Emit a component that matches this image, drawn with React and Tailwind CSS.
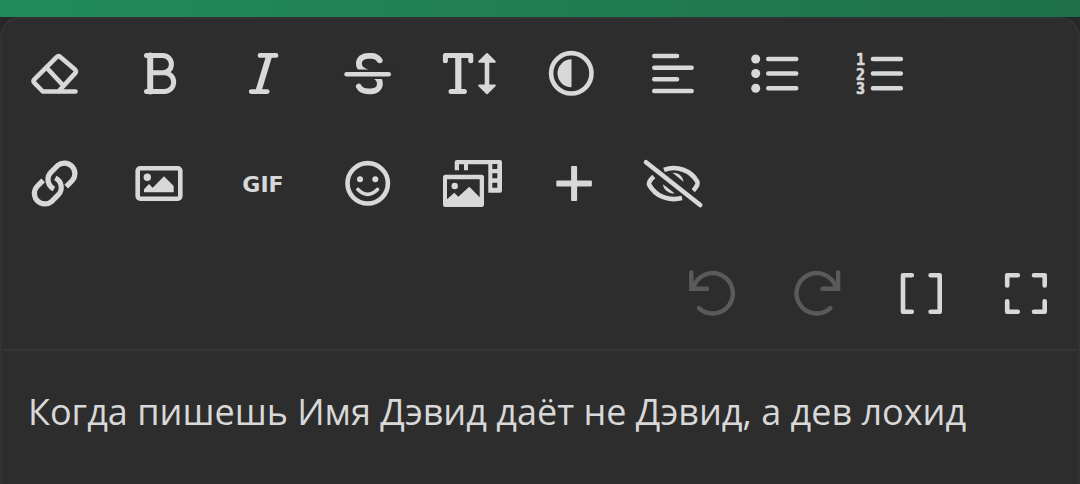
import { useState } from 'react';

function Icon({ children }) {
  return (
    <svg
      viewBox="-4 0 72 64"
      className="h-16 w-[72px]"
      fill="none"
      stroke="currentColor"
      strokeWidth="4.6"
      strokeLinecap="round"
      strokeLinejoin="round"
      aria-hidden="true"
    >
      {children}
    </svg>
  );
}

const eraser = (
  <Icon>
    <path d="M53.5 49.5H20.8L12.6 41.2q-2-2 0-4L34.6 15.2q2-2 4 0L53 27.6q1.8 1.8 0 3.8L36.5 49.5M24.7 25.7l15.8 17" />
  </Icon>
);

const bold = (
  <Icon>
    <g strokeWidth="5">
      <path d="M20.5 13.6H36.8a8.6 8.6 0 0 1 0 17.2H25M36.8 30.8h1.6a9.3 9.3 0 0 1 0 18.6H20.5" />
      <path d="M24.2 13.6v35.8" strokeWidth="6" />
    </g>
  </Icon>
);

const italic = (
  <Icon>
    <path d="M30 13.4H46M21.2 49.6H37.2" strokeWidth="4.8" />
    <path d="M39 14.3L28.5 48.8" strokeWidth="6" />
  </Icon>
);

const strike = (
  <Icon>
    <path
      d="M45.7 18.3C43.5 15 40.5 13.8 37.5 13.8H34C28.5 13.8 24.9 17.2 24.9 21.6C24.9 27.5 30 29 35.5 31.5C41 34 45.9 36 45.9 41.5C45.9 46 42.5 49.3 37 49.3H34.5C30 49.3 26.5 47.8 24.8 44.5"
      strokeWidth="5.8"
    />
    <path d="M12.6 32.3H54.7" stroke="#2d2d2d" strokeWidth="9.6" />
    <path d="M12.6 32.3H54.7" />
  </Icon>
);

const textSize = (
  <Icon>
    <path d="M8.4 18.8V13.6H33.8V18.8M14 49.6H27.4" strokeWidth="5" />
    <path d="M21.3 14v35" strokeWidth="6.2" />
    <path d="M50 18v27" />
    <path
      d="M50 12l7.8 7.8H42.2zM50 51.3l7.8-7.8H42.2z"
      fill="currentColor"
      strokeWidth="2"
    />
  </Icon>
);

const contrast = (
  <Icon>
    <circle cx="32.3" cy="31.3" r="20.2" />
    <path d="M32.5 17.3A14 14 0 0 0 32.5 45.3Z" fill="currentColor" stroke="none" />
  </Icon>
);

const align = (
  <Icon>
    <path d="M13.3 14H36M13.3 25.7H50.6M13.3 37.3H36M13.3 49H50.6" />
  </Icon>
);

const bulletList = (
  <Icon>
    <path d="M24.3 17H52.2M24.3 31.5H52.2M24.3 46.3H52.2" />
    <g fill="currentColor" stroke="none">
      <circle cx="11.7" cy="17" r="4.5" />
      <circle cx="11.7" cy="31.5" r="4.5" />
      <circle cx="11.7" cy="46.3" r="4.5" />
    </g>
  </Icon>
);

const numberList = (
  <Icon>
    <path d="M25 17H52.8M25 31.5H52.8M25 46.3H52.8" />
    <text
      fill="currentColor"
      strokeWidth="0.6"
      className="font-['DejaVu_Sans_Mono',monospace] text-[15px] font-bold"
    >
      <tspan x="8" y="23">1</tspan>
      <tspan x="8" y="38">2</tspan>
      <tspan x="8" y="52">3</tspan>
    </text>
  </Icon>
);

const link = (
  <Icon>
    <g strokeWidth="5.2" strokeLinecap="butt">
      <path d="M44.2 34.6L50.4 28.4A10.5 10.5 0 0 0 35.6 13.6L29.1 20.1A10.5 10.5 0 0 0 32 37" />
      <path d="M21.1 28.4L14.9 34.6A10.5 10.5 0 0 0 29.7 49.4L36.2 42.9A10.5 10.5 0 0 0 33.3 26" />
    </g>
  </Icon>
);

const image = (
  <Icon>
    <rect x="11.7" y="16.3" width="42.6" height="30.4" rx="2.5" />
    <g fill="currentColor" stroke="none">
      <circle cx="21.3" cy="25.3" r="3.7" />
      <path d="M18 40.3V37.3L23 32L26.7 35.7L38 24.3L47.7 34V40.3Z" />
    </g>
  </Icon>
);

const gif = (
  <span className="pt-0.5 pl-0.5 font-['DejaVu_Sans',sans-serif] text-[22px] leading-6 font-bold">
    GIF
  </span>
);

const smiley = (
  <Icon>
    <circle cx="33.7" cy="31.3" r="20.2" />
    <path d="M24 37.5Q33.7 47.3 43.4 37.5" strokeWidth="3.8" />
    <g fill="currentColor" stroke="none">
      <circle cx="26" cy="27.3" r="3" />
      <circle cx="41.3" cy="27.3" r="3" />
    </g>
  </Icon>
);

const gallery = (
  <Icon>
    <g fill="currentColor" stroke="none" fillRule="evenodd">
      <path d="M20 8H63Q65 8 65 10V38.7Q65 40.7 63 40.7H51.3V12.3H31V18.3H27V12.3H22V18.3H17.7V10.3Q17.7 8 20 8ZM55.3 12V17H60.3V12ZM55.3 21.3V26.3H60.3V21.3ZM55.3 30.7V35.7H60.3V30.7Z" />
      <path d="M8.5 22.7H44.5Q47 22.7 47 25.2V52.5Q47 55 44.5 55H8.5Q6 55 6 52.5V25.2Q6 22.7 8.5 22.7ZM10 27.3V47.3L17.3 40.7L21.3 44.7L32.3 34.7L42.7 45.3V27.3Z" />
      <circle cx="17.7" cy="34" r="3.2" />
    </g>
  </Icon>
);

const plus = (
  <Icon>
    <g fill="currentColor" stroke="none">
      <rect x="16.3" y="28.5" width="35.6" height="6" rx="1" />
      <rect x="31.1" y="14" width="6" height="35" rx="1" />
    </g>
  </Icon>
);

const hidden = (
  <Icon>
    <path d="M3 10.2L57.2 53" />
    <g strokeLinecap="butt">
      <path d="M21 17.8C34 13 48 18.5 54.3 29.6Q55 31.3 54.2 33Q52.8 36 50.2 38.6" />
      <path d="M10.8 24.6Q8 27 6.3 30.2Q5.6 31.6 6.3 33C12.5 44 25 49.5 39 46" />
    </g>
    <g fill="currentColor" stroke="none">
      <path d="M29.5 20.8C35.5 20.3 40 24.5 40.5 29.7Z" />
      <path d="M20 32.3C20.5 38 26 42 31.5 41.3Z" />
    </g>
  </Icon>
);

const undo = (
  <Icon>
    <g strokeWidth="4.4">
      <path d="M17 46.2A20.2 20.2 0 1 0 11.5 25" />
      <path d="M9.3 10.5V26.7H25" strokeLinejoin="miter" />
    </g>
  </Icon>
);

const redo = (
  <Icon>
    <g strokeWidth="4.4">
      <path d="M44.4 46.2A20.2 20.2 0 1 1 49.9 25" />
      <path d="M52.1 10.5V26.7H36.4" strokeLinejoin="miter" />
    </g>
  </Icon>
);

const brackets = (
  <Icon>
    <path d="M21.8 13.3H13V49.7H21.8M40.6 13.3H49.7V49.7H40.6" />
  </Icon>
);

const fullscreen = (
  <Icon>
    <path d="M23.8 13.3H13.2V23.5M40 13.3H50.7V23.5M13.2 39.3V49.7H23.8M40 49.7H50.7V39.3" />
  </Icon>
);

const formatTools = [
  { label: 'Очистить форматирование', icon: eraser },
  { label: 'Жирный', icon: bold },
  { label: 'Курсив', icon: italic },
  { label: 'Зачёркнутый', icon: strike },
  { label: 'Размер шрифта', icon: textSize, narrow: true },
  { label: 'Цвет текста', icon: contrast, narrow: true },
  { label: 'Выравнивание', icon: align, narrow: true },
  { label: 'Маркированный список', icon: bulletList },
  { label: 'Нумерованный список', icon: numberList },
];

const insertTools = [
  { label: 'Ссылка', icon: link },
  { label: 'Изображение', icon: image },
  { label: 'Вставить GIF', icon: gif },
  { label: 'Смайлы', icon: smiley },
  { label: 'Медиа', icon: gallery, narrow: true },
  { label: 'Вставить', icon: plus },
  { label: 'Скрытый текст', icon: hidden, narrow: true },
];

const viewTools = [
  { label: 'Отменить', icon: undo, disabled: true },
  { label: 'Повторить', icon: redo, disabled: true },
  { label: 'BB-коды', icon: brackets },
  { label: 'На весь экран', icon: fullscreen },
];

function ToolbarRow({ tools, className = '' }) {
  return (
    <div className={`flex flex-wrap ${className}`}>
      {tools.map((tool) => (
        <button
          key={tool.label}
          type="button"
          aria-label={tool.label}
          disabled={tool.disabled}
          className={`flex h-[110px] items-center justify-center text-[#d8d8d8] disabled:text-[#5a5a5a] ${
            tool.narrow ? 'w-[102px]' : 'w-[104px]'
          }`}
        >
          {tool.icon}
        </button>
      ))}
    </div>
  );
}

function App() {
  const [message, setMessage] = useState('Когда пишешь Имя Дэвид даёт не Дэвид, а дев лохид');

  return (
    <div className="flex min-h-screen flex-col bg-[#272727]">
      <div className="h-[17px] bg-linear-to-r from-[#228b5b] to-[#1e714b]" />
      <div className="flex flex-1 flex-col rounded-t-[20px] border-2 border-b-0 border-[#333333] bg-[#2d2d2d]">
        <div role="toolbar" aria-label="Форматирование">
          <ToolbarRow tools={formatTools} />
          <ToolbarRow tools={insertTools} />
          <ToolbarRow tools={viewTools} className="justify-end" />
        </div>
        <div className="mx-0.5 h-0.5 bg-[#363636]" />
        <textarea
          aria-label="Сообщение"
          value={message}
          onChange={(e) => setMessage(e.target.value)}
          rows={1}
          className="w-full flex-1 resize-none bg-transparent px-[26px] py-9 font-['Open_Sans','Noto_Sans',sans-serif] text-[36px] leading-[50px] text-[#d8d8d8] outline-none"
        />
      </div>
    </div>
  );
}

export default App;
